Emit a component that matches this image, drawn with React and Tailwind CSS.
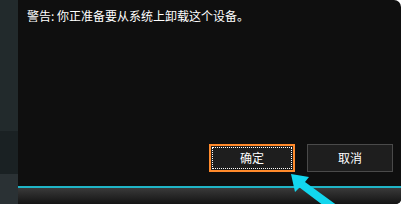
import React from 'react';

const font = { fontFamily: '"Noto Sans CJK SC", "Liberation Sans", sans-serif' };

const Arrow = () => (
  <svg
    className="absolute left-0 top-0 pointer-events-none"
    width="401"
    height="204"
    viewBox="0 0 401 204"
  >
    <polygon
      points="291,174 309,177 305,182 338,206 332,212 299.5,187.5 295,192"
      fill="#12d6ee"
    />
  </svg>
);

const App = () => {
  return (
    <div className="relative w-[401px] h-[204px] bg-white flex overflow-hidden" style={font}>
      {/* side window strip */}
      <div className="w-[18px] h-full flex flex-col">
        <div className="h-[131px] bg-[#222a2c]" />
        <div className="h-[43px] bg-[#1a2123]" />
        <div className="flex-1 bg-[#2a3134]" />
      </div>

      {/* dialog */}
      <div className="flex-1 h-full flex flex-col bg-[#0f0f0f] rounded-tr-[7px] rounded-br-[5px] overflow-hidden">
        <div className="pt-[7px] pl-[9px] text-[12px] leading-[17px] text-white">
          警告: 你正准备要从系统上卸载这个设备。
        </div>

        <div className="flex-1" />

        <div className="flex justify-end gap-[12px] pr-[8px] pb-[14px]">
          <button className="w-[86px] h-[28px] bg-[#1e1e1e] border-2 border-[#ff8a2c] text-white text-[12px] outline-1 outline-dotted outline-white outline-offset-[-4px]">
            确定
          </button>
          <button className="w-[86px] h-[28px] bg-[#1e1e1e] border border-[#4a4a4a] text-white text-[12px]">
            取消
          </button>
        </div>

        <div className="h-[2px] bg-[#1fb4c6]" />
        <div className="h-[16px] bg-gradient-to-b from-[#3a3a3a] to-[#141414]" />
      </div>

      <Arrow />
    </div>
  );
};

export default App;
